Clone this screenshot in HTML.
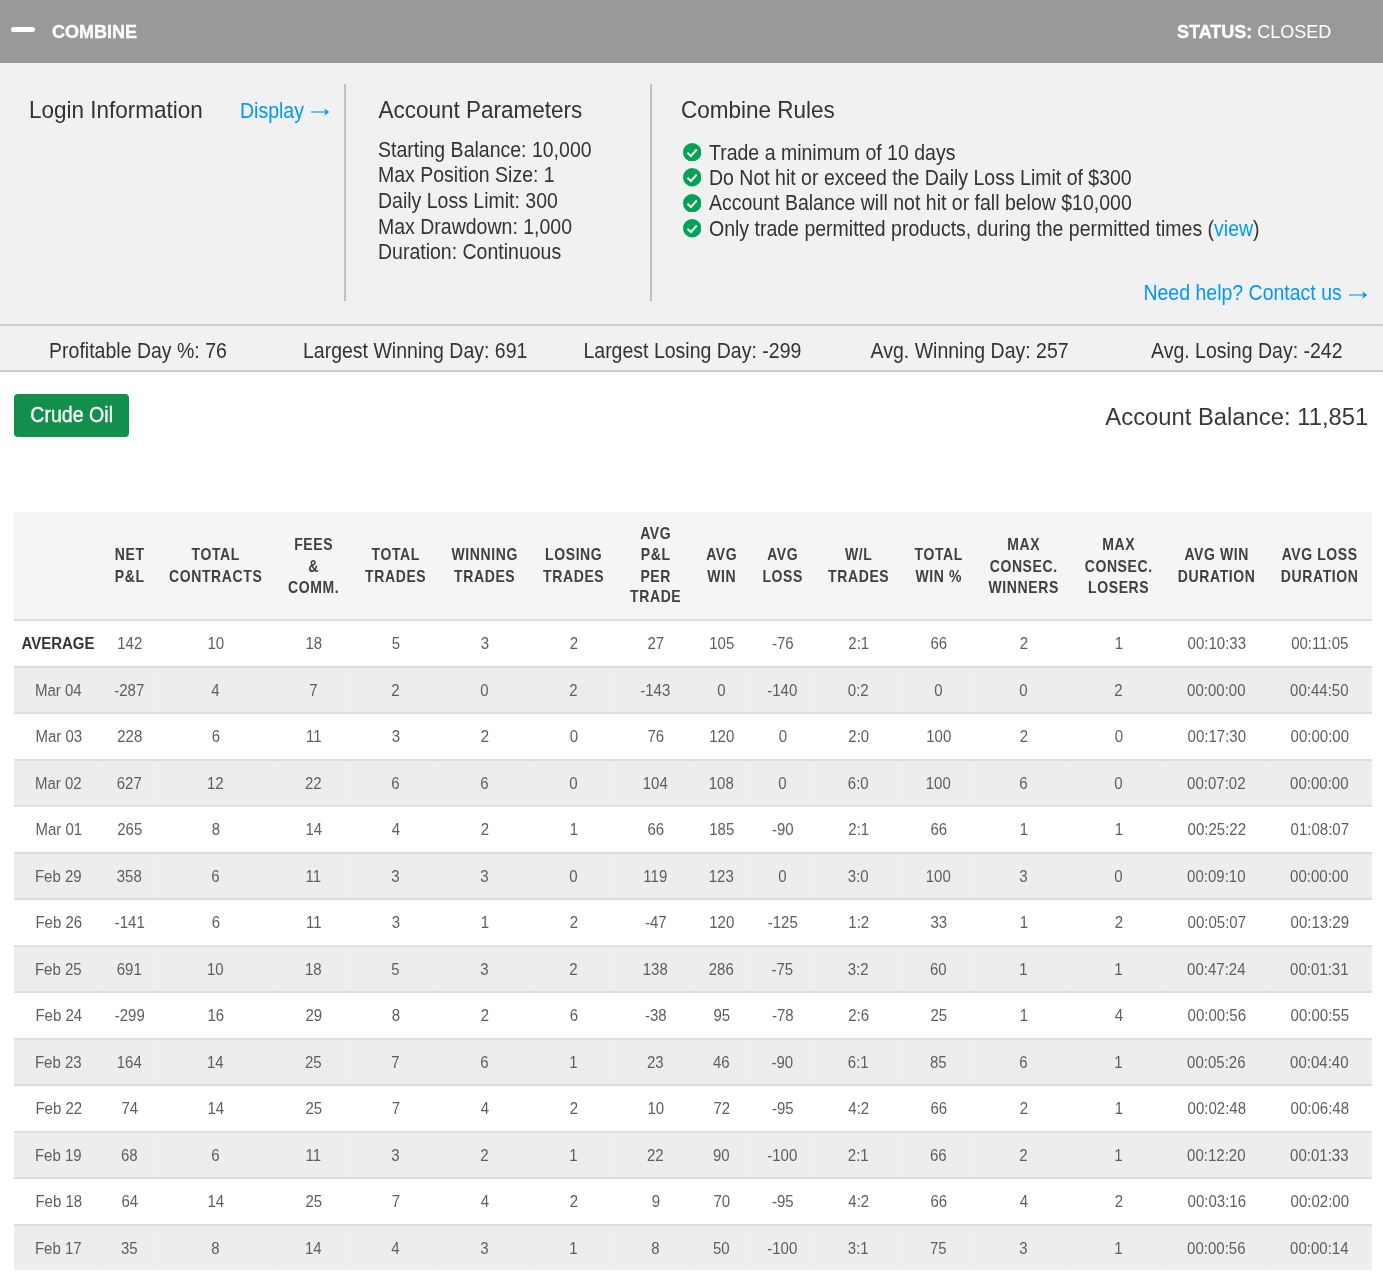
<!DOCTYPE html>
<html><head><meta charset="utf-8">
<style>
*{margin:0;padding:0;box-sizing:border-box}
html,body{width:1383px;height:1272px;overflow:hidden;background:#fff;font-family:"Liberation Sans",sans-serif;color:#333}
.a{position:absolute;white-space:nowrap}
#hdr{position:absolute;left:0;top:0;width:1383px;height:63px;background:#999}
#minus{position:absolute;left:11px;top:27px;width:24px;height:5px;border-radius:3px;background:#fff}
#panel{position:absolute;left:0;top:63px;width:1383px;height:261px;background:#f1f1f1}
.vd{position:absolute;top:84px;height:217px;width:2px;background:#c0c0c0}
#stats{position:absolute;left:0;top:324px;width:1383px;height:48px;background:#f1f1f1;border-top:2px solid #ccc;border-bottom:2px solid #ccc}
#stats div{position:absolute;top:0;width:277.2px;text-align:center;font-size:19.5px;line-height:50.6px;color:#333;transform:scaleY(1.16);transform-origin:50% 32.06px}
.link{color:#0096ff}
.h2{font-size:22.5px;color:#3a3a3a}
.p{font-size:19.5px;color:#333}
.chk{position:absolute;width:18.4px;height:18.6px}
.arr{position:absolute}
.bs{display:inline-block;transform:scaleY(1.14);transform-origin:50% 28.09px}
#btn{position:absolute;left:14px;top:394px;width:115.3px;height:42.8px;background:#138f4d;border-radius:4px;color:#fff;font-size:19.6px;line-height:42.6px;text-align:center;-webkit-text-stroke:0.3px #fff}
#tbl{position:absolute;left:14px;top:512px;width:1358px}
.row{position:relative;display:flex;border-bottom:2px solid #ddd}
.row div{flex:none;text-align:center;display:flex;align-items:center;justify-content:center}
.hd{height:109px;background:#f5f5f5;font-weight:bold;font-size:14px;line-height:21px;color:#404040;letter-spacing:0.6px}
.hd div{padding-left:1.4px}
.hd span{display:inline-block;line-height:18.75px;transform:scaleY(1.12)}
.br{height:46.5px;font-size:15px;color:#5e5e5e}
.br.s{background:#ededed}
.row:last-child{border-bottom:0;height:44.5px}
.br.s div{border-right:1px solid #efefef}
.br div{padding-left:1.6px}
.br span{display:inline-block;line-height:18px;transform:translateY(0.9px) scaleY(1.05);transform-origin:50% 14.2px}
</style></head><body><div id="root" style="position:absolute;left:0;top:0;width:1383px;height:1272px;will-change:transform">
<div id="hdr">
  <div id="minus"></div>
  <div class="a" style="left:52px;top:20px;font-size:18px;font-weight:bold;color:#fff;line-height:24px;-webkit-text-stroke:0.35px #fff">COMBINE</div>
  <div class="a" style="left:1177px;top:20px;font-size:18px;color:#fff;line-height:24px"><b style="-webkit-text-stroke:0.35px #fff">STATUS:</b> CLOSED</div>
</div>
<div id="panel"></div>
<div class="vd" style="left:344px"></div>
<div class="vd" style="left:650px"></div>
<div class="a" style="left:29px;top:97.5px;line-height:26px;font-size:22.5px;transform:scaleY(1.10);transform-origin:0 20.80px">Login Information</div>
<div class="a link" style="left:240px;top:97.6px;line-height:26px;font-size:19.5px;transform:scaleY(1.16);transform-origin:0 19.76px">Display</div>
<div class="a" style="left:378.5px;top:97.5px;line-height:26px;font-size:22.5px;transform:scaleY(1.10);transform-origin:0 20.80px">Account Parameters</div>
<div class="a" style="left:378px;top:137.70px;line-height:25.6px;font-size:19.5px;transform:scaleY(1.16);transform-origin:0 19.56px">Starting Balance: 10,000</div>
<div class="a" style="left:378px;top:163.30px;line-height:25.6px;font-size:19.5px;transform:scaleY(1.16);transform-origin:0 19.56px">Max Position Size: 1</div>
<div class="a" style="left:378px;top:188.90px;line-height:25.6px;font-size:19.5px;transform:scaleY(1.16);transform-origin:0 19.56px">Daily Loss Limit: 300</div>
<div class="a" style="left:378px;top:214.50px;line-height:25.6px;font-size:19.5px;transform:scaleY(1.16);transform-origin:0 19.56px">Max Drawdown: 1,000</div>
<div class="a" style="left:378px;top:240.10px;line-height:25.6px;font-size:19.5px;transform:scaleY(1.16);transform-origin:0 19.56px">Duration: Continuous</div>
<div class="a" style="left:681px;top:97.5px;line-height:26px;font-size:22.5px;transform:scaleY(1.10);transform-origin:0 20.80px">Combine Rules</div>
<div class="a" style="left:709px;top:140.50px;line-height:25.4px;font-size:19.5px;transform:scaleY(1.16);transform-origin:0 19.46px">Trade a minimum of 10 days</div>
<div class="a" style="left:709px;top:165.90px;line-height:25.4px;font-size:19.5px;transform:scaleY(1.16);transform-origin:0 19.46px">Do Not hit or exceed the Daily Loss Limit of $300</div>
<div class="a" style="left:709px;top:191.30px;line-height:25.4px;font-size:19.5px;transform:scaleY(1.16);transform-origin:0 19.46px">Account Balance will not hit or fall below $10,000</div>
<div class="a" style="left:709px;top:216.70px;line-height:25.4px;font-size:19.5px;transform:scaleY(1.16);transform-origin:0 19.46px">Only trade permitted products, during the permitted times (<span class="link">view</span>)</div>
<svg class="chk" style="left:683px;top:142.9px" viewBox="0 0 18 18"><circle cx="9" cy="9" r="9" fill="#02a257"/><path d="M4.4 9.4L7.7 12.7L13.5 6.3" stroke="#f4f4f4" stroke-width="2" fill="none"/></svg>
<svg class="chk" style="left:683px;top:168.3px" viewBox="0 0 18 18"><circle cx="9" cy="9" r="9" fill="#02a257"/><path d="M4.4 9.4L7.7 12.7L13.5 6.3" stroke="#f4f4f4" stroke-width="2" fill="none"/></svg>
<svg class="chk" style="left:683px;top:193.9px" viewBox="0 0 18 18"><circle cx="9" cy="9" r="9" fill="#02a257"/><path d="M4.4 9.4L7.7 12.7L13.5 6.3" stroke="#f4f4f4" stroke-width="2" fill="none"/></svg>
<svg class="chk" style="left:683px;top:219.3px" viewBox="0 0 18 18"><circle cx="9" cy="9" r="9" fill="#02a257"/><path d="M4.4 9.4L7.7 12.7L13.5 6.3" stroke="#f4f4f4" stroke-width="2" fill="none"/></svg>
<div class="a link" style="right:41.2px;top:280px;font-size:19.5px;line-height:26px;transform:scaleY(1.16);transform-origin:0 19.76px">Need help? Contact us</div>
<svg class="arr" style="left:309.5px;top:107.1px" width="20" height="10" viewBox="0 0 20 10"><path d="M1 5H16" stroke="#0096ff" stroke-width="1.3" opacity="0.85"/><path d="M14.2 1.2L19.2 5L14.2 8.8L15.6 5Z" fill="#0096ff"/></svg>
<svg class="arr" style="left:1347.5px;top:289.5px" width="20" height="10" viewBox="0 0 20 10"><path d="M1 5H16" stroke="#0096ff" stroke-width="1.3" opacity="0.85"/><path d="M14.2 1.2L19.2 5L14.2 8.8L15.6 5Z" fill="#0096ff"/></svg>
<div id="stats">
  <div style="left:-0.6px">Profitable Day %: 76</div>
  <div style="left:276.6px">Largest Winning Day: 691</div>
  <div style="left:553.8px">Largest Losing Day: -299</div>
  <div style="left:831.0px">Avg. Winning Day: 257</div>
  <div style="left:1108.2px">Avg. Losing Day: -242</div>
</div>
<div id="btn"><span class="bs">Crude Oil</span></div>
<div class="a" style="right:14.8px;top:401.6px;font-size:23.8px;line-height:30px;color:#383838;transform:scaleY(1.03);transform-origin:0 23.25px">Account Balance: 11,851</div>
<div id="tbl">
<div class="row hd"><div style="width:88px"><span></span></div><div style="width:54px"><span>NET<br>P&amp;L</span></div><div style="width:118px"><span>TOTAL<br>CONTRACTS</span></div><div style="width:78px"><span style="margin-top:1.2px">FEES<br>&amp;<br>COMM.</span></div><div style="width:86px"><span>TOTAL<br>TRADES</span></div><div style="width:92px"><span>WINNING<br>TRADES</span></div><div style="width:86px"><span>LOSING<br>TRADES</span></div><div style="width:78px"><span>AVG<br>P&amp;L<br>PER<br>TRADE</span></div><div style="width:54px"><span>AVG<br>WIN</span></div><div style="width:68px"><span>AVG<br>LOSS</span></div><div style="width:84px"><span>W/L<br>TRADES</span></div><div style="width:76px"><span>TOTAL<br>WIN %</span></div><div style="width:94px"><span style="margin-top:1.2px">MAX<br>CONSEC.<br>WINNERS</span></div><div style="width:96px"><span style="margin-top:1.2px">MAX<br>CONSEC.<br>LOSERS</span></div><div style="width:100px"><span>AVG WIN<br>DURATION</span></div><div style="width:106px"><span>AVG LOSS<br>DURATION</span></div></div>
<div class="row br"><div style="width:88px;font-weight:bold;color:#333;padding-left:0"><span>AVERAGE</span></div><div style="width:54px"><span>142</span></div><div style="width:118px"><span>10</span></div><div style="width:78px"><span>18</span></div><div style="width:86px"><span>5</span></div><div style="width:92px"><span>3</span></div><div style="width:86px"><span>2</span></div><div style="width:78px"><span>27</span></div><div style="width:54px"><span>105</span></div><div style="width:68px"><span>-76</span></div><div style="width:84px"><span>2:1</span></div><div style="width:76px"><span>66</span></div><div style="width:94px"><span>2</span></div><div style="width:96px"><span>1</span></div><div style="width:100px"><span>00:10:33</span></div><div style="width:106px"><span>00:11:05</span></div></div>
<div class="row br s"><div style="width:88px"><span>Mar 04</span></div><div style="width:54px"><span>-287</span></div><div style="width:118px"><span>4</span></div><div style="width:78px"><span>7</span></div><div style="width:86px"><span>2</span></div><div style="width:92px"><span>0</span></div><div style="width:86px"><span>2</span></div><div style="width:78px"><span>-143</span></div><div style="width:54px"><span>0</span></div><div style="width:68px"><span>-140</span></div><div style="width:84px"><span>0:2</span></div><div style="width:76px"><span>0</span></div><div style="width:94px"><span>0</span></div><div style="width:96px"><span>2</span></div><div style="width:100px"><span>00:00:00</span></div><div style="width:106px"><span>00:44:50</span></div></div>
<div class="row br"><div style="width:88px"><span>Mar 03</span></div><div style="width:54px"><span>228</span></div><div style="width:118px"><span>6</span></div><div style="width:78px"><span>11</span></div><div style="width:86px"><span>3</span></div><div style="width:92px"><span>2</span></div><div style="width:86px"><span>0</span></div><div style="width:78px"><span>76</span></div><div style="width:54px"><span>120</span></div><div style="width:68px"><span>0</span></div><div style="width:84px"><span>2:0</span></div><div style="width:76px"><span>100</span></div><div style="width:94px"><span>2</span></div><div style="width:96px"><span>0</span></div><div style="width:100px"><span>00:17:30</span></div><div style="width:106px"><span>00:00:00</span></div></div>
<div class="row br s"><div style="width:88px"><span>Mar 02</span></div><div style="width:54px"><span>627</span></div><div style="width:118px"><span>12</span></div><div style="width:78px"><span>22</span></div><div style="width:86px"><span>6</span></div><div style="width:92px"><span>6</span></div><div style="width:86px"><span>0</span></div><div style="width:78px"><span>104</span></div><div style="width:54px"><span>108</span></div><div style="width:68px"><span>0</span></div><div style="width:84px"><span>6:0</span></div><div style="width:76px"><span>100</span></div><div style="width:94px"><span>6</span></div><div style="width:96px"><span>0</span></div><div style="width:100px"><span>00:07:02</span></div><div style="width:106px"><span>00:00:00</span></div></div>
<div class="row br"><div style="width:88px"><span>Mar 01</span></div><div style="width:54px"><span>265</span></div><div style="width:118px"><span>8</span></div><div style="width:78px"><span>14</span></div><div style="width:86px"><span>4</span></div><div style="width:92px"><span>2</span></div><div style="width:86px"><span>1</span></div><div style="width:78px"><span>66</span></div><div style="width:54px"><span>185</span></div><div style="width:68px"><span>-90</span></div><div style="width:84px"><span>2:1</span></div><div style="width:76px"><span>66</span></div><div style="width:94px"><span>1</span></div><div style="width:96px"><span>1</span></div><div style="width:100px"><span>00:25:22</span></div><div style="width:106px"><span>01:08:07</span></div></div>
<div class="row br s"><div style="width:88px"><span>Feb 29</span></div><div style="width:54px"><span>358</span></div><div style="width:118px"><span>6</span></div><div style="width:78px"><span>11</span></div><div style="width:86px"><span>3</span></div><div style="width:92px"><span>3</span></div><div style="width:86px"><span>0</span></div><div style="width:78px"><span>119</span></div><div style="width:54px"><span>123</span></div><div style="width:68px"><span>0</span></div><div style="width:84px"><span>3:0</span></div><div style="width:76px"><span>100</span></div><div style="width:94px"><span>3</span></div><div style="width:96px"><span>0</span></div><div style="width:100px"><span>00:09:10</span></div><div style="width:106px"><span>00:00:00</span></div></div>
<div class="row br"><div style="width:88px"><span>Feb 26</span></div><div style="width:54px"><span>-141</span></div><div style="width:118px"><span>6</span></div><div style="width:78px"><span>11</span></div><div style="width:86px"><span>3</span></div><div style="width:92px"><span>1</span></div><div style="width:86px"><span>2</span></div><div style="width:78px"><span>-47</span></div><div style="width:54px"><span>120</span></div><div style="width:68px"><span>-125</span></div><div style="width:84px"><span>1:2</span></div><div style="width:76px"><span>33</span></div><div style="width:94px"><span>1</span></div><div style="width:96px"><span>2</span></div><div style="width:100px"><span>00:05:07</span></div><div style="width:106px"><span>00:13:29</span></div></div>
<div class="row br s"><div style="width:88px"><span>Feb 25</span></div><div style="width:54px"><span>691</span></div><div style="width:118px"><span>10</span></div><div style="width:78px"><span>18</span></div><div style="width:86px"><span>5</span></div><div style="width:92px"><span>3</span></div><div style="width:86px"><span>2</span></div><div style="width:78px"><span>138</span></div><div style="width:54px"><span>286</span></div><div style="width:68px"><span>-75</span></div><div style="width:84px"><span>3:2</span></div><div style="width:76px"><span>60</span></div><div style="width:94px"><span>1</span></div><div style="width:96px"><span>1</span></div><div style="width:100px"><span>00:47:24</span></div><div style="width:106px"><span>00:01:31</span></div></div>
<div class="row br"><div style="width:88px"><span>Feb 24</span></div><div style="width:54px"><span>-299</span></div><div style="width:118px"><span>16</span></div><div style="width:78px"><span>29</span></div><div style="width:86px"><span>8</span></div><div style="width:92px"><span>2</span></div><div style="width:86px"><span>6</span></div><div style="width:78px"><span>-38</span></div><div style="width:54px"><span>95</span></div><div style="width:68px"><span>-78</span></div><div style="width:84px"><span>2:6</span></div><div style="width:76px"><span>25</span></div><div style="width:94px"><span>1</span></div><div style="width:96px"><span>4</span></div><div style="width:100px"><span>00:00:56</span></div><div style="width:106px"><span>00:00:55</span></div></div>
<div class="row br s"><div style="width:88px"><span>Feb 23</span></div><div style="width:54px"><span>164</span></div><div style="width:118px"><span>14</span></div><div style="width:78px"><span>25</span></div><div style="width:86px"><span>7</span></div><div style="width:92px"><span>6</span></div><div style="width:86px"><span>1</span></div><div style="width:78px"><span>23</span></div><div style="width:54px"><span>46</span></div><div style="width:68px"><span>-90</span></div><div style="width:84px"><span>6:1</span></div><div style="width:76px"><span>85</span></div><div style="width:94px"><span>6</span></div><div style="width:96px"><span>1</span></div><div style="width:100px"><span>00:05:26</span></div><div style="width:106px"><span>00:04:40</span></div></div>
<div class="row br"><div style="width:88px"><span>Feb 22</span></div><div style="width:54px"><span>74</span></div><div style="width:118px"><span>14</span></div><div style="width:78px"><span>25</span></div><div style="width:86px"><span>7</span></div><div style="width:92px"><span>4</span></div><div style="width:86px"><span>2</span></div><div style="width:78px"><span>10</span></div><div style="width:54px"><span>72</span></div><div style="width:68px"><span>-95</span></div><div style="width:84px"><span>4:2</span></div><div style="width:76px"><span>66</span></div><div style="width:94px"><span>2</span></div><div style="width:96px"><span>1</span></div><div style="width:100px"><span>00:02:48</span></div><div style="width:106px"><span>00:06:48</span></div></div>
<div class="row br s"><div style="width:88px"><span>Feb 19</span></div><div style="width:54px"><span>68</span></div><div style="width:118px"><span>6</span></div><div style="width:78px"><span>11</span></div><div style="width:86px"><span>3</span></div><div style="width:92px"><span>2</span></div><div style="width:86px"><span>1</span></div><div style="width:78px"><span>22</span></div><div style="width:54px"><span>90</span></div><div style="width:68px"><span>-100</span></div><div style="width:84px"><span>2:1</span></div><div style="width:76px"><span>66</span></div><div style="width:94px"><span>2</span></div><div style="width:96px"><span>1</span></div><div style="width:100px"><span>00:12:20</span></div><div style="width:106px"><span>00:01:33</span></div></div>
<div class="row br"><div style="width:88px"><span>Feb 18</span></div><div style="width:54px"><span>64</span></div><div style="width:118px"><span>14</span></div><div style="width:78px"><span>25</span></div><div style="width:86px"><span>7</span></div><div style="width:92px"><span>4</span></div><div style="width:86px"><span>2</span></div><div style="width:78px"><span>9</span></div><div style="width:54px"><span>70</span></div><div style="width:68px"><span>-95</span></div><div style="width:84px"><span>4:2</span></div><div style="width:76px"><span>66</span></div><div style="width:94px"><span>4</span></div><div style="width:96px"><span>2</span></div><div style="width:100px"><span>00:03:16</span></div><div style="width:106px"><span>00:02:00</span></div></div>
<div class="row br s"><div style="width:88px"><span>Feb 17</span></div><div style="width:54px"><span>35</span></div><div style="width:118px"><span>8</span></div><div style="width:78px"><span>14</span></div><div style="width:86px"><span>4</span></div><div style="width:92px"><span>3</span></div><div style="width:86px"><span>1</span></div><div style="width:78px"><span>8</span></div><div style="width:54px"><span>50</span></div><div style="width:68px"><span>-100</span></div><div style="width:84px"><span>3:1</span></div><div style="width:76px"><span>75</span></div><div style="width:94px"><span>3</span></div><div style="width:96px"><span>1</span></div><div style="width:100px"><span>00:00:56</span></div><div style="width:106px"><span>00:00:14</span></div></div>
</div>
</div></body></html>
